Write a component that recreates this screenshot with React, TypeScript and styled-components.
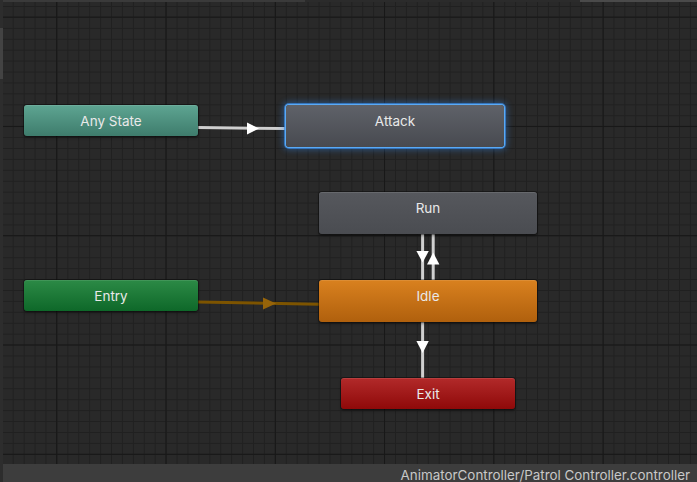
import React from "react";
import styled, { createGlobalStyle, css } from "styled-components";

const GlobalStyle = createGlobalStyle`
  html, body { margin: 0; padding: 0; background: #282828; }
  body { font-family: Inter, "Noto Sans", "Liberation Sans", sans-serif; }
  #root { width: 697px; height: 482px; }
`;

const OX = 3;
const OY = 2;
const MAJOR = 109.3;
const MINOR = 10.93;

const Window = styled.div`
  display: flex;
  width: 697px;
  height: 482px;
  overflow: hidden;
  background: #282828;
`;

const LeftEdge = styled.div`
  width: 3px;
  flex: none;
  background: #2d2d2d;
  display: flex;
  flex-direction: column;
`;

const LeftTab = styled.div`
  margin-top: 28px;
  height: 51px;
  background: #434343;
`;

const Main = styled.div`
  flex: 1;
  display: flex;
  flex-direction: column;
  min-width: 0;
`;

const TopEdge = styled.div`
  height: 2px;
  flex: none;
  display: flex;
  background: #2b2b2b;
`;

const TopSegment = styled.div<{ $w: number; $color: string; $grow?: boolean }>`
  width: ${(p) => p.$w}px;
  flex: ${(p) => (p.$grow ? 1 : "none")};
  background: ${(p) => p.$color};
`;

const Canvas = styled.div`
  position: relative;
  flex: 1;
  overflow: hidden;
  background-color: #292929;
  background-image:
    linear-gradient(to right, #171717 1px, transparent 1px),
    linear-gradient(to bottom, #171717 1px, transparent 1px),
    linear-gradient(to right, #202020 1px, transparent 1px),
    linear-gradient(to bottom, #202020 1px, transparent 1px);
  background-size:
    ${MAJOR}px ${MAJOR}px,
    ${MAJOR}px ${MAJOR}px,
    ${MINOR}px ${MINOR}px,
    ${MINOR}px ${MINOR}px;
  background-position:
    ${56.2 - OX}px 0,
    0 ${16.6 - OY}px,
    ${1.8 - OX + MINOR}px 0,
    0 ${6 - OY}px;
`;

const Wires = styled.svg`
  position: absolute;
  inset: 0;
  width: 100%;
  height: 100%;
  pointer-events: none;
`;

type Kind = "any" | "state" | "selected" | "default" | "entry" | "exit";

const skins: Record<Kind, ReturnType<typeof css>> = {
  any: css`
    background: linear-gradient(to bottom, #5ea592, #3e7c6c);
  `,
  state: css`
    background: linear-gradient(to bottom, #56585d, #4a4c51);
  `,
  selected: css`
    background: linear-gradient(to bottom, #5f6269, #484a50);
    box-shadow:
      0 0 0 1px #5aaaf5,
      0 0 0 2px rgba(60, 140, 230, 0.7),
      0 0 6px 3px rgba(50, 130, 225, 0.45);
  `,
  default: css`
    background: linear-gradient(to bottom, #d9811f, #b0600d);
  `,
  entry: css`
    background: linear-gradient(to bottom, #2c8a46, #0e6829);
  `,
  exit: css`
    background: linear-gradient(to bottom, #b22a2a, #8f0909);
  `,
};

const Node = styled.div<{ $x: number; $y: number; $w: number; $h: number; $kind: Kind }>`
  position: absolute;
  left: ${(p) => p.$x - OX}px;
  top: ${(p) => p.$y - OY}px;
  width: ${(p) => p.$w}px;
  height: ${(p) => p.$h}px;
  box-sizing: border-box;
  border-radius: 3px;
  display: flex;
  justify-content: center;
  align-items: flex-start;
  color: #e9e9e9;
  font-size: 13.5px;
  box-shadow:
    inset 0 1px 0 rgba(255, 255, 255, 0.1),
    0 0 0 1px rgba(0, 0, 0, 0.3),
    0 2px 3px rgba(0, 0, 0, 0.35);
  ${(p) => skins[p.$kind]}
`;

const Label = styled.span`
  line-height: 32px;
  white-space: nowrap;
`;

const StatusBar = styled.div`
  height: 18px;
  flex: none;
  box-sizing: border-box;
  padding: 2px 7px 0 0;
  background: #3d3d3d;
  color: #c8c8c8;
  font-size: 13.4px;
  line-height: 18px;
  text-align: right;
  white-space: nowrap;
  overflow: hidden;
`;

const nodes: { name: string; x: number; y: number; w: number; h: number; kind: Kind }[] = [
  { name: "Any State", x: 24, y: 105, w: 174, h: 31, kind: "any" },
  { name: "Attack", x: 286, y: 105, w: 218, h: 42, kind: "selected" },
  { name: "Run", x: 319, y: 192, w: 218, h: 42, kind: "state" },
  { name: "Entry", x: 24, y: 280, w: 174, h: 31, kind: "entry" },
  { name: "Idle", x: 319, y: 280, w: 218, h: 42, kind: "default" },
  { name: "Exit", x: 341, y: 378, w: 174, h: 31, kind: "exit" },
];

const LINE = "#cfcfcf";
const HEAD = "#ffffff";
const ENTRY_LINE = "#7d5400";
const ENTRY_HEAD = "#96640a";

export default function App() {
  return (
    <>
      <GlobalStyle />
      <Window>
        <LeftEdge>
          <LeftTab />
        </LeftEdge>
        <Main>
          <TopEdge>
            <TopSegment $w={302} $color="#3a3a3a" />
            <TopSegment $w={0} $color="#2b2b2b" $grow />
            <TopSegment $w={117} $color="#4a4a4a" />
          </TopEdge>
          <Canvas>
            <Wires viewBox={`${OX} ${OY} 694 462`} preserveAspectRatio="xMinYMin meet">
              {/* Any State -> Attack */}
              <line x1={198} y1={127.6} x2={286} y2={128.6} stroke={LINE} strokeWidth={3} />
              <polygon points="247,122.5 247,134.5 259,128.4" fill={HEAD} />
              {/* Entry -> Idle */}
              <line x1={198} y1={302} x2={319} y2={304.2} stroke={ENTRY_LINE} strokeWidth={3} />
              <polygon points="263,297.4 263,309.6 276,303.6" fill={ENTRY_HEAD} />
              {/* Run -> Idle */}
              <line x1={422.6} y1={234} x2={422.6} y2={280} stroke={LINE} strokeWidth={3} />
              <polygon points="416.4,251 428.8,251 422.6,262.5" fill={HEAD} />
              {/* Idle -> Run */}
              <line x1={433.2} y1={234} x2={433.2} y2={280} stroke={LINE} strokeWidth={3} />
              <polygon points="433.2,252.5 427,264.5 439.4,264.5" fill={HEAD} />
              {/* Idle -> Exit */}
              <line x1={422.6} y1={322} x2={422.6} y2={378} stroke={LINE} strokeWidth={3} />
              <polygon points="416.4,341 428.8,341 422.6,353" fill={HEAD} />
            </Wires>
            {nodes.map((n) => (
              <Node key={n.name} $x={n.x} $y={n.y} $w={n.w} $h={n.h} $kind={n.kind}>
                <Label>{n.name}</Label>
              </Node>
            ))}
          </Canvas>
          <StatusBar>AnimatorController/Patrol Controller.controller</StatusBar>
        </Main>
      </Window>
    </>
  );
}
